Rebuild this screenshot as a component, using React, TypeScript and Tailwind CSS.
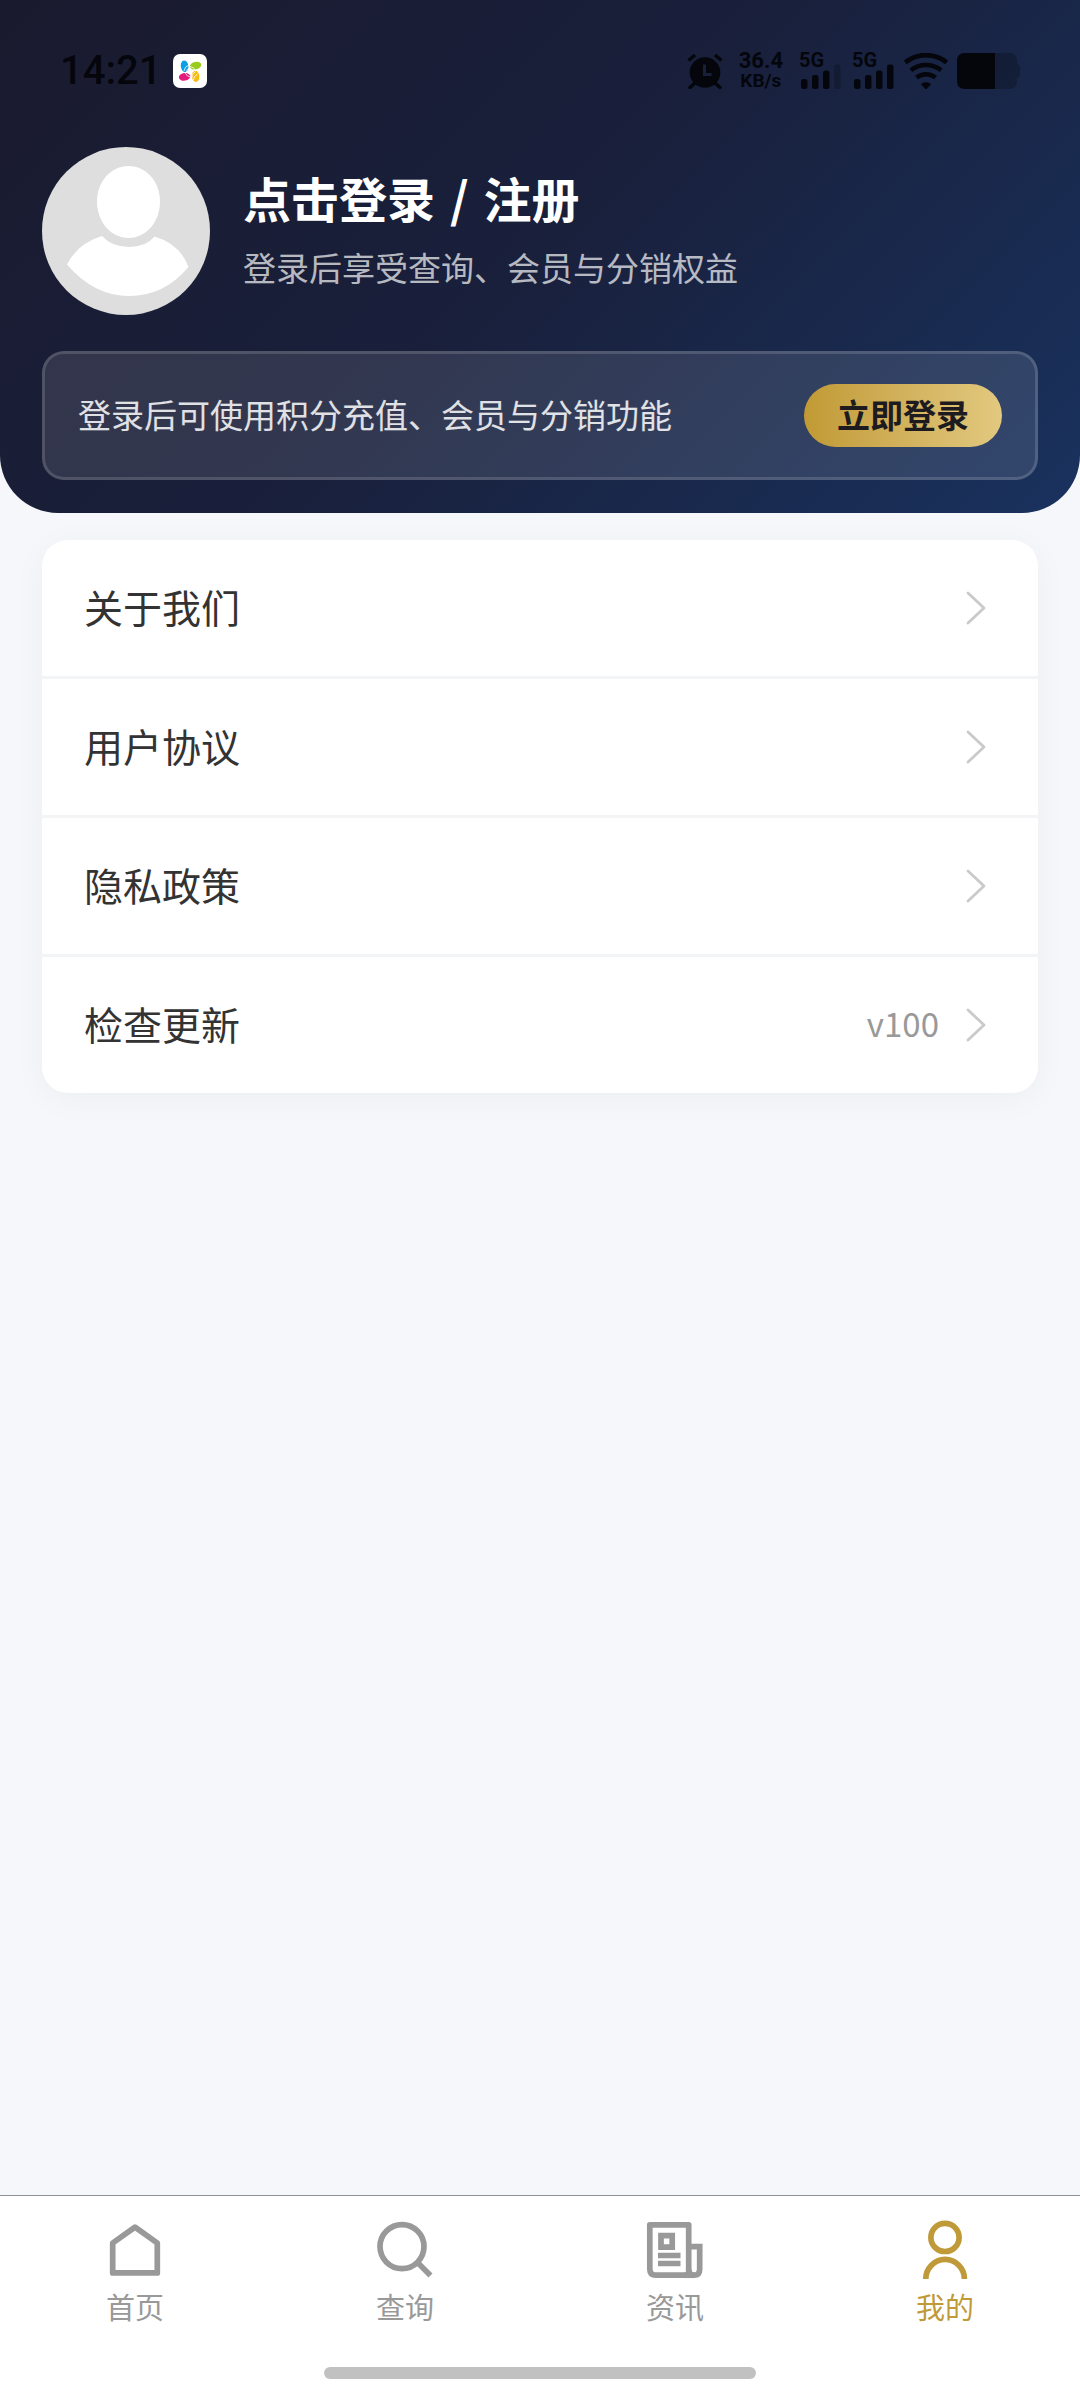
import type { ReactNode } from 'react';
import clsx from 'clsx';

const menuItems = [
  { label: '关于我们' },
  { label: '用户协议' },
  { label: '隐私政策' },
  { label: '检查更新', extra: 'v100' },
];

function AppBadge() {
  return (
    <svg viewBox="0 0 34 34" className="ml-3 size-[34px]" aria-hidden="true">
      <rect width="34" height="34" rx="7" fill="#fff" />
      <ellipse cx="11.6" cy="12.2" rx="3.8" ry="5.8" fill="#0b9fe3" transform="rotate(-8 11.6 12.2)" />
      <ellipse cx="22.6" cy="11.6" rx="5.8" ry="3.8" fill="#9bcb1c" transform="rotate(-14 22.6 11.6)" />
      <ellipse cx="11.6" cy="22.8" rx="5.8" ry="3.8" fill="#e4197c" transform="rotate(-10 11.6 22.8)" />
      <ellipse cx="22.6" cy="22.4" rx="3.8" ry="5.6" fill="#f8bb10" transform="rotate(-6 22.6 22.4)" />
      <g fill="none" stroke="#fff" strokeWidth="0.8">
        <path d="M11 17q.5-4.500 5-6M13.500 18q0-3 3-4.500" />
        <path d="M17 12.500q4 .500 5.500 4M17 15q2.500 0 3.500 2.500" />
        <path d="M12 19q2.500 4 5.500 4M14.500 18q1 2.500 3 3" />
        <path d="M19 24q-1-4 3.500-6.500M20.500 26q0-4 4-6" />
      </g>
    </svg>
  );
}

function AlarmIcon() {
  return (
    <svg viewBox="0 0 36 36" className="size-9" aria-hidden="true">
      <g fill="none" stroke="currentColor" strokeWidth="3.600">
        <path d="M1.500 7.500 8 2M34.500 7.500 28 2" />
        <path d="M8 30l-5 4.500M28 30l5 4.500" strokeLinecap="round" />
      </g>
      <circle cx="18" cy="19.500" r="15.300" fill="currentColor" />
      <path d="M17.500 11.500v10h7" fill="none" stroke="#192039" strokeWidth="3" />
    </svg>
  );
}

function Signal({ weak }: { weak?: boolean }) {
  return (
    <div className="relative h-9 w-[43px]">
      <span className="absolute top-0 left-0 font-[Roboto] text-[20px] leading-[15px] font-bold">5G</span>
      <svg viewBox="0 0 43 36" className="h-9 w-[43px]" fill="currentColor" aria-hidden="true">
        <rect x="2" y="26" width="6.500" height="10" rx="2.500" />
        <rect x="13" y="22" width="6.500" height="14" rx="2.500" />
        <rect x="24" y="17.500" width="6.500" height="18.500" rx="2.500" />
        <rect x="35" y="11.500" width="6.500" height="24.500" rx="2.500" opacity={weak ? 0.25 : 1} />
      </svg>
    </div>
  );
}

function WifiIcon() {
  return (
    <svg viewBox="0 0 44 36" className="ml-[9px] h-9 w-11" aria-hidden="true">
      <g fill="none" stroke="currentColor" strokeWidth="4.600">
        <path d="M1.300 9.500C13-.4 31-.4 42.700 9.500" />
        <path d="M6.800 17.200c8.800-7 21.600-7 30.400 0" />
        <path d="M12.500 24.500c5.500-4.400 13.500-4.400 19 0" />
      </g>
      <path d="M17 31.200c2.800-2.600 7.200-2.600 10 0L23.200 35.400q-1.200 1.100-2.400 0Z" fill="currentColor" />
    </svg>
  );
}

function BatteryIcon() {
  return (
    <svg viewBox="0 0 64 36" className="ml-[9px] h-9 w-16" fill="currentColor" aria-hidden="true">
      <path d="M38 0h14q8 0 8 8v3q3 1 3 4v6q0 3-3 4v3q0 8-8 8H38Z" opacity="0.28" />
      <path d="M8 0h30v36H8q-8 0-8-8V8q0-8 8-8Z" />
    </svg>
  );
}

function StatusBar() {
  return (
    <div className="flex h-9 items-center justify-between pr-[17px] pl-[18px] text-[#04060c]">
      <div className="flex items-center">
        <span className="font-[Roboto] text-[40px] leading-9 font-medium">14:21</span>
        <AppBadge />
      </div>
      <div className="flex items-center">
        <AlarmIcon />
        <div className="mx-4 text-center font-[Roboto] leading-5 font-bold">
          <div className="text-[22px] leading-5">36.4</div>
          <div className="text-[19px] leading-5">KB/s</div>
        </div>
        <div className="flex gap-[10px]">
          <Signal weak />
          <Signal />
        </div>
        <WifiIcon />
        <BatteryIcon />
      </div>
    </div>
  );
}

function Avatar() {
  return (
    <svg viewBox="0 0 168 168" className="size-[168px] shrink-0 rounded-full" aria-hidden="true">
      <rect width="168" height="168" fill="#dedede" />
      <path
        d="M86.500 19C104 19 118 34.500 118 54.500S104.500 91 86.500 91 55 74.500 55 54.500 69 19 86.500 19Z"
        fill="#fff"
      />
      <path
        d="M60 89Q70 100 87 100T112.500 89.500Q138 97 146.500 120Q122 149 87 149T25 117.500Q36 96 60 89Z"
        fill="#fff"
      />
    </svg>
  );
}

function Chevron() {
  return (
    <svg viewBox="0 0 20 34" className="h-[34px] w-5" fill="none" aria-hidden="true">
      <path d="M2 2l16 15L2 32" stroke="#cacaca" strokeWidth="2.800" strokeLinecap="round" strokeLinejoin="round" />
    </svg>
  );
}

function TabItem({ label, active, children }: { label: string; active?: boolean; children: ReactNode }) {
  return (
    <a
      href="#"
      aria-current={active ? 'page' : undefined}
      className={clsx('flex flex-1 flex-col items-center', active ? 'text-[#c09a38]' : 'text-[#999999]')}
    >
      <svg viewBox="0 0 72 72" className="size-[72px]" fill="none" stroke="currentColor" strokeWidth="5.700" aria-hidden="true">
        {children}
      </svg>
      <span className="pb-1 text-[29px] leading-10">{label}</span>
    </a>
  );
}

export default function App() {
  return (
    <div className="flex min-h-screen flex-col bg-[#f5f7fb] font-['Noto_Sans_CJK_SC',sans-serif]">
      {/* Header */}
      <header className="rounded-b-[58px] bg-[linear-gradient(135deg,#1a1a2e_0%,#19203c_50%,#19325e_100%)] px-[42px] pt-[53px] pb-[33px]">
        <StatusBar />

        <a href="#" className="mt-[58px] flex items-center gap-[33px]">
          <Avatar />
          <div className="pb-1">
            <h1 className="text-[48px] leading-[68px] font-bold text-white">
              点击登录 <span className="mx-1">/</span> 注册
            </h1>
            <p className="mt-2 text-[33px] leading-[56px] text-white/70">登录后享受查询、会员与分销权益</p>
          </div>
        </a>

        <div className="mt-9 flex items-center justify-between rounded-[22px] border-3 border-white/15 bg-white/11 px-[33px] py-[30px]">
          <p className="pb-1 text-[33px] leading-[48px] text-white/85">登录后可使用积分充值、会员与分销功能</p>
          <button
            type="button"
            className="h-[63px] rounded-full bg-linear-to-r from-[#c19a34] to-[#e2c97f] px-[33px] pb-1 text-[33px] leading-[48px] font-bold text-[#1d1b20]"
          >
            立即登录
          </button>
        </div>
      </header>

      {/* Menu */}
      <main className="flex-1 px-[42px] pt-[27px]">
        <ul className="overflow-hidden rounded-[26px] bg-white shadow-[0_6px_34px_rgba(0,0,0,0.04)]">
          {menuItems.map((item) => (
            <li key={item.label} className="border-b-3 border-[#f3f4f6] last:border-b-0">
              <a href="#" className="flex h-[136px] items-center pr-[52px] pl-[42px]">
                <span className="flex-1 pb-1 text-[39px] leading-[56px] text-[#333333]">{item.label}</span>
                {item.extra && <span className="mr-[27px] pb-1 text-[33px] leading-[48px] text-[#999999]">{item.extra}</span>}
                <Chevron />
              </a>
            </li>
          ))}
        </ul>
      </main>

      {/* Tab bar */}
      <nav className="border-t border-[#8f9198] bg-white pt-[18px]">
        <div className="flex">
          <TabItem label="首页">
            <path d="M36 13.200 58.300 29v29.900H13.700V29Z" strokeLinejoin="round" />
          </TabItem>
          <TabItem label="查询">
            <circle cx="33" cy="32.600" r="22" />
            <path d="m48.500 48.500 13 13" />
          </TabItem>
          <TabItem label="资讯">
            <path d="M10.800 10.800h38.900v50.400H17q-6.200 0-6.200-6.200Z" strokeLinejoin="round" />
            <path d="M49.700 32.700h11v22.300q0 6.200-5.500 6.200t-5.500-6.200" />
            <path d="M45 61.200h11" />
            <path d="M22 21.700h11.200v11.500H22ZM19 41.500h22.500M19 49.500h22.500" />
          </TabItem>
          <TabItem label="我的" active>
            <circle cx="36" cy="23.400" r="14.100" />
            <path d="M16.800 65a19.300 19.600 0 0 1 38.600 0" />
          </TabItem>
        </div>
        <div className="mx-auto mt-[37px] mb-[21px] h-3 w-2/5 rounded-full bg-[#c1c1c1]" />
      </nav>
    </div>
  );
}
